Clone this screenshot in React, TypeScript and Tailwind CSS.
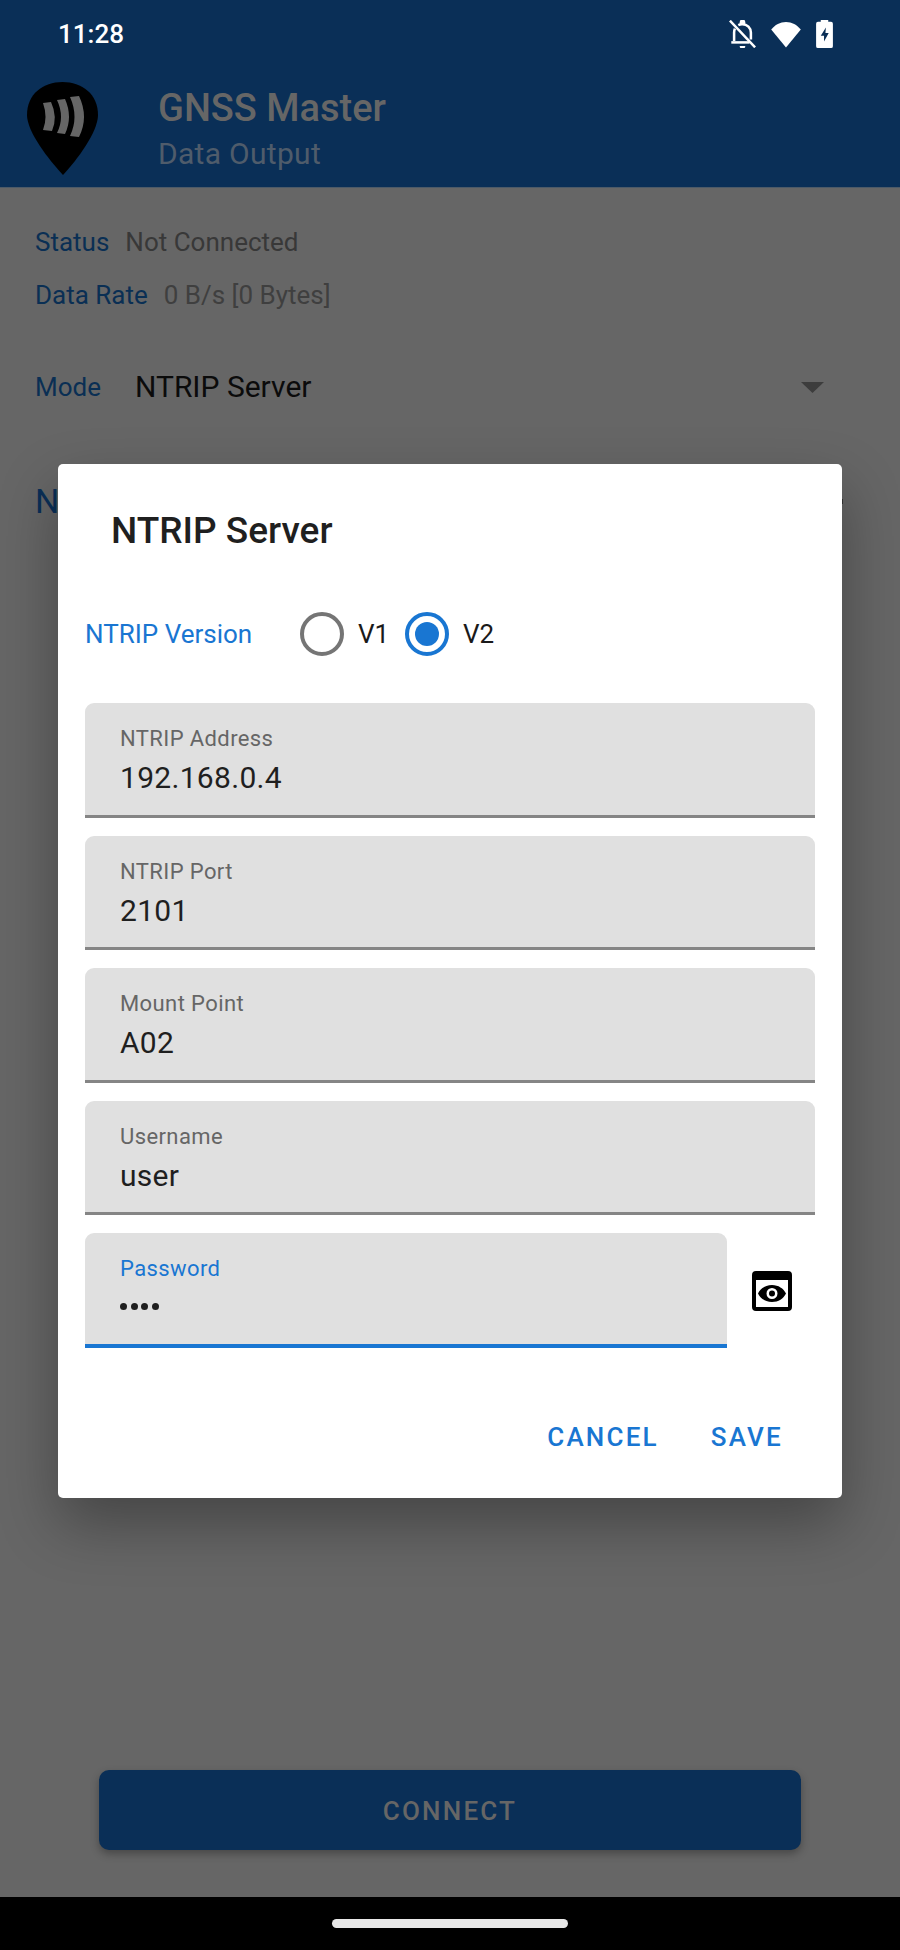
import React from "react";

function BellOff() {
  return (
    <svg width="27" height="28" viewBox="2.500 2 19 20" fill="none" stroke="#fff" strokeWidth="1.800">
      <path d="M6 17V11c0-1 .2-2 .6-2.8M9 5.6A6 6 0 0 1 12 5a6 6 0 0 1 6 6v5" />
      <path d="M4 18h13" />
      <path d="M10 3.6a2 2 0 0 1 4 0V5h-4z" fill="#fff" stroke="none" />
      <path d="M10 20.5h4a2 2 0 0 1-4 0z" fill="#fff" stroke="none" />
      <path d="M3 2.5l18 19" />
    </svg>
  );
}

function Wifi() {
  return (
    <svg width="32" height="27" viewBox="0 0 33 29" fill="#fff">
      <path d="M16.5 28.5L.6 9.2C4.6 4 10.2 1 16.5 1s11.900 3 15.900 8.200z" />
    </svg>
  );
}

function Battery() {
  return (
    <svg width="17" height="28" viewBox="0 0 18 30">
      <path fill="#fff" d="M5 0h8v2h3a2 2 0 0 1 2 2v24a2 2 0 0 1-2 2H2a2 2 0 0 1-2-2V4a2 2 0 0 1 2-2h3z" />
      <path fill="#0a2f57" d="M10.500 8L5 17h3.500v6L13.500 14H10z" />
    </svg>
  );
}

function Logo() {
  return (
    <svg width="71" height="93" viewBox="0 0 71 93">
      <path fill="#000" d="M35.500 0C55 0 71 12 71 33C71 50 50 78 36 93C22 78 0 50 0 33C0 12 16 0 35.500 0z" />
      <path fill="#666" d="M16 21L24 20Q31 35 25 49L16 48Q21 35 16 21z" />
      <path fill="#666" d="M30 18L38 17Q46 35 38 52L30 51Q38 35 30 18z" />
      <path fill="#666" d="M43 15L52 14Q62 35 52 55L43 54Q52 35 43 15z" />
    </svg>
  );
}

function EyeIcon() {
  return (
    <svg width="40" height="40" viewBox="0 0 40 40">
      <path fill="#000" fillRule="evenodd" d="M4 0h32a4 4 0 0 1 4 4v32a4 4 0 0 1-4 4H4a4 4 0 0 1-4-4V4a4 4 0 0 1 4-4zM4 9v27h32V9z" />
      <path fill="#000" fillRule="evenodd" d="M20 14c6.500 0 11.500 3.500 14 8.500C31.500 27.500 26.500 31 20 31S8.500 27.500 6 22.500C8.500 17.500 13.500 14 20 14zm0 3a5.500 5.500 0 1 0 0 11a5.500 5.500 0 0 0 0-11z" />
      <circle cx="20" cy="22.500" r="3" fill="#000" />
    </svg>
  );
}

function Field({ label, value }: { label: string; value: string }) {
  return (
    <div className="h-[114.5px] rounded-t-[9px] bg-[#e0e0e0] border-b-[3px] border-[#858585] pl-[35px] pt-[20px]">
      <div className="text-[22px] leading-[32px] text-[#666666] tracking-[0.4px]">{label}</div>
      <div className="mt-[4px] text-[30px] leading-[38px] text-[#1f1f1f] tracking-[0.3px]">{value}</div>
    </div>
  );
}

export default function App() {
  return (
    <div className="relative w-[900px] h-[1950px] overflow-hidden bg-[#666666] flex flex-col font-['Roboto',sans-serif]">
      <header className="h-[188px] shrink-0 bg-[#0a2f57] flex flex-col border-b border-[#4c5a68]">
        <div className="h-[68px] flex items-center justify-between pl-[58px] pr-[67px]">
          <span className="text-white text-[26px] font-medium">11:28</span>
          <div className="flex items-center gap-[14px]">
            <BellOff />
            <Wifi />
            <Battery />
          </div>
        </div>
        <div className="flex items-start pl-[27px]">
          <div className="mt-[14px] w-[131px] shrink-0">
            <Logo />
          </div>
          <div className="pt-[20px]">
            <div className="text-[38px] leading-[40px] font-medium text-[#666666]">GNSS Master</div>
            <div className="mt-[9px] text-[30px] leading-[34px] text-[#4f5c6b] tracking-[0.3px]">Data Output</div>
          </div>
        </div>
      </header>

      <main className="flex-1 px-[35px] pt-[36px] flex flex-col">
        <div className="flex gap-[16px] text-[26px] leading-[36px]">
          <span className="text-[#0a2f54]">Status</span>
          <span className="text-[#383838]">Not Connected</span>
        </div>
        <div className="mt-[17px] flex gap-[16px] text-[26px] leading-[36px]">
          <span className="text-[#0a2f54]">Data Rate</span>
          <span className="text-[#3f3f3f]">0 B/s [0 Bytes]</span>
        </div>
        <div className="mt-[54px] flex items-center text-[26px] leading-[40px]">
          <span className="w-[100px] text-[#0a2f54]">Mode</span>
          <span className="text-[30px] text-[#0b0b0b]">NTRIP Server</span>
          <svg className="ml-auto mr-[41px]" width="23" height="11" viewBox="0 0 23 11">
            <path d="M0 0h23L11.500 11z" fill="#3d3d3d" />
          </svg>
        </div>
        <div className="mt-[74px] flex items-center text-[34px] leading-[40px] text-[#0a2f57]">
          <span>NTRIP</span>
          <span className="ml-auto mr-[22px] w-[2px] h-[5px] bg-[#333333]" />
        </div>
        <div className="mt-auto mx-[64px] mb-[47px] h-[80px] rounded-[10px] bg-[#0a2f57] shadow-[0_4px_8px_rgba(0,0,0,0.3)] flex items-center justify-center pt-[3px] text-[26px] font-medium tracking-[2.2px] text-[#666666]">
          CONNECT
        </div>
      </main>

      <footer className="h-[53px] shrink-0 bg-black flex justify-center pt-[22px]">
        <div className="w-[236px] h-[9px] rounded-full bg-[#e8e8e8]" />
      </footer>

      <div className="absolute left-[58px] top-[464px] w-[784px] h-[1034px] bg-white rounded-[5px] shadow-[0_26px_60px_rgba(0,0,0,0.32)] flex flex-col px-[27px]">
        <h2 className="mt-[45px] pl-[26px] text-[37px] leading-[44px] font-medium text-[#1f1f1f]">NTRIP Server</h2>
        <div className="mt-[59px] flex items-center h-[44px]">
          <span className="w-[215px] text-[26px] text-[#1976d2]">NTRIP Version</span>
          <span className="w-[44px] h-[44px] rounded-full border-[4px] border-[#757575]" />
          <span className="ml-[14px] w-[47px] text-[26px] text-[#1a1a1a]">V1</span>
          <span className="w-[44px] h-[44px] rounded-full border-[4px] border-[#1976d2] flex items-center justify-center">
            <span className="w-[24px] h-[24px] rounded-full bg-[#1976d2]" />
          </span>
          <span className="ml-[14px] text-[26px] text-[#1a1a1a]">V2</span>
        </div>
        <div className="mt-[47px] flex flex-col gap-[18px]">
          <Field label="NTRIP Address" value="192.168.0.4" />
          <Field label="NTRIP Port" value="2101" />
          <Field label="Mount Point" value="A02" />
          <Field label="Username" value="user" />
          <div className="flex items-center">
            <div className="w-[642px] h-[115px] rounded-t-[9px] bg-[#e0e0e0] border-b-[4px] border-[#1976d2] pl-[35px] pt-[20px]">
              <div className="text-[22px] leading-[32px] text-[#1976d2] tracking-[0.4px]">Password</div>
              <div className="mt-[2px] flex items-center gap-[3.500px] h-[38px]">
                <span className="w-[7px] h-[7px] rounded-full bg-[#1f1f1f]" />
                <span className="w-[7px] h-[7px] rounded-full bg-[#1f1f1f]" />
                <span className="w-[7px] h-[7px] rounded-full bg-[#1f1f1f]" />
                <span className="w-[7px] h-[7px] rounded-full bg-[#1f1f1f]" />
              </div>
            </div>
            <div className="ml-[25px]">
              <EyeIcon />
            </div>
          </div>
        </div>
        <div className="mt-[71px] flex justify-end gap-[52px] pr-[32px] text-[26px] leading-[36px] font-medium tracking-[2.2px] text-[#1976d2]">
          <span>CANCEL</span>
          <span>SAVE</span>
        </div>
      </div>
    </div>
  );
}
